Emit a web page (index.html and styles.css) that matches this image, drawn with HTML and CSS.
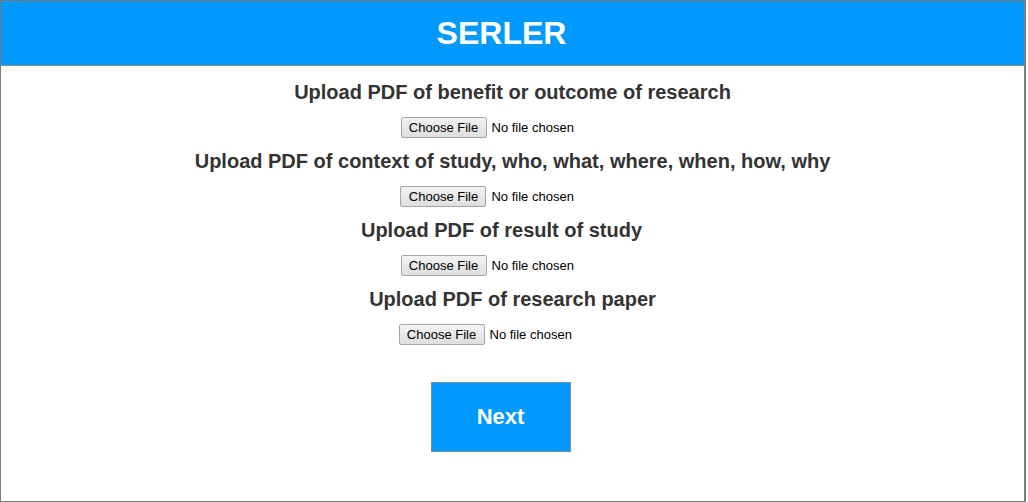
FILE: index.html
```html
<!DOCTYPE html>
<html>
<head>
<meta charset="utf-8">
<title>SERLER</title>
<link rel="stylesheet" href="styles.css">
</head>
<body>
<div class="frame">
  <header class="header">
    <h1 class="title">SERLER</h1>
  </header>
  <main class="content">
    <section class="upload">
      <h3 class="upload-label">Upload PDF of benefit or outcome of research</h3>
      <input class="file" type="file" accept="application/pdf">
    </section>
    <section class="upload">
      <h3 class="upload-label">Upload PDF of context of study, who, what, where, when, how, why</h3>
      <input class="file" type="file" accept="application/pdf">
    </section>
    <section class="upload">
      <h3 class="upload-label upload-label-offset">Upload PDF of result of study</h3>
      <input class="file" type="file" accept="application/pdf">
    </section>
    <section class="upload">
      <h3 class="upload-label">Upload PDF of research paper</h3>
      <input class="file file-narrow" type="file" accept="application/pdf">
    </section>
    <button class="next" type="button">Next</button>
  </main>
</div>
</body>
</html>
```
FILE: styles.css
```css
html, body {
  margin: 0;
  padding: 0;
  background: #ffffff;
}

.frame {
  box-sizing: border-box;
  width: 1026px;
  height: 502px;
  border: 1px solid #7a7a7a;
  border-right-width: 2px;
  display: flex;
  flex-direction: column;
  font-family: Arial, "Liberation Sans", sans-serif;
}

.header {
  height: 64px;
  background: #0099ff;
  border-bottom: 1px solid #8a8a8a;
  display: flex;
  align-items: center;
  justify-content: center;
}

.title {
  margin: 0 22px 0 0;
  color: #ffffff;
  font-size: 32px;
  font-weight: bold;
  line-height: 37px;
  padding-top: 1px;
}

.content {
  padding-top: 15px;
  display: flex;
  flex-direction: column;
  align-items: center;
  gap: 12px;
}

.upload {
  display: flex;
  flex-direction: column;
  align-items: center;
}

.upload-label {
  margin: 0 0 13px;
  font-size: 20px;
  line-height: 23px;
  font-weight: bold;
  color: #333333;
}

.upload-label-offset {
  margin-right: 22px;
}

.file {
  box-sizing: border-box;
  width: 224px;
  height: 21px;
  padding: 0;
  margin: 0;
  font-family: Arial, "Liberation Sans", sans-serif;
  font-size: 13px;
  color: #000000;
  line-height: 21px;
}

.file-narrow {
  margin-right: 4px;
}

.file::file-selector-button {
  box-sizing: border-box;
  height: 21px;
  width: 86px;
  margin: 0 5px 0 0;
  padding: 0 6px;
  font-family: Arial, "Liberation Sans", sans-serif;
  font-size: 13px;
  color: #000000;
  background: linear-gradient(#f3f3f3, #dedede);
  border: 1px solid #a6a6a6;
  border-radius: 2px;
}

.next {
  margin: 25px 24px 0 0;
  box-sizing: border-box;
  width: 140px;
  height: 70px;
  background: #0099ff;
  border: 1px solid #7a8a99;
  color: #ffffff;
  font-family: Arial, "Liberation Sans", sans-serif;
  font-size: 22px;
  font-weight: bold;
  padding: 0;
}
```
